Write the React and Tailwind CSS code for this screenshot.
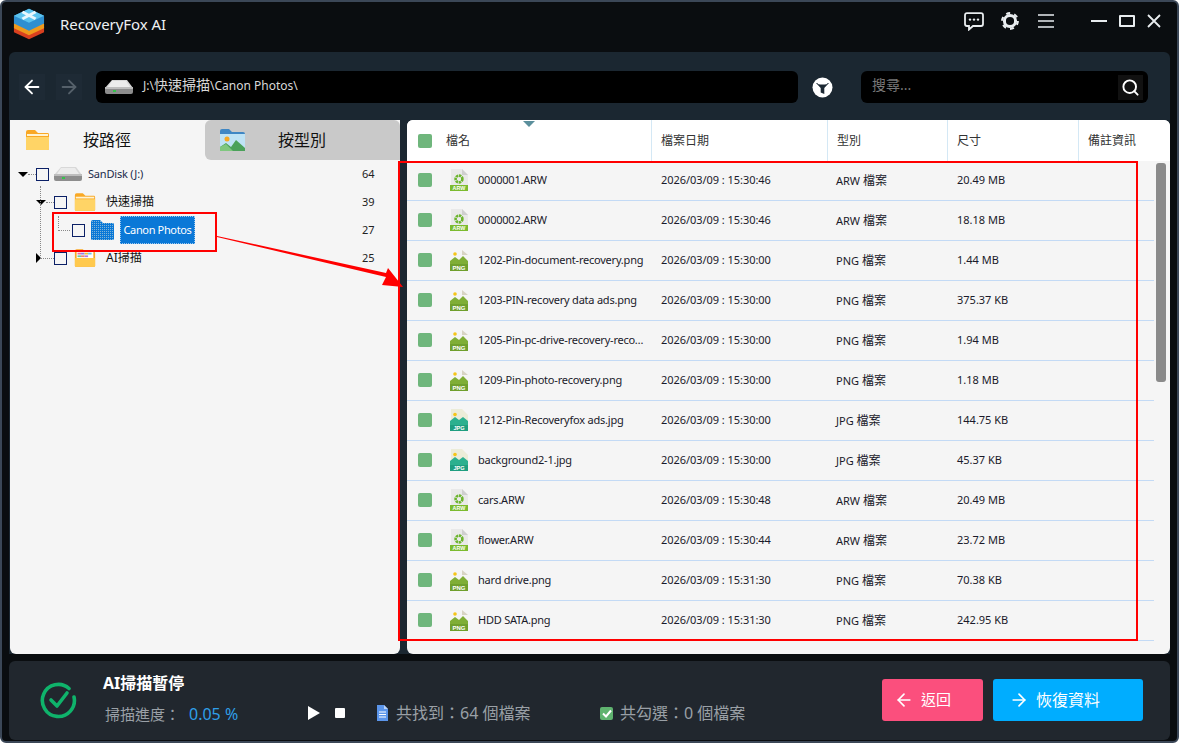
import React from 'react';
import { ArrowLeft, ArrowRight, Search } from 'lucide-react';

const files = [
  { name: '0000001.ARW', date: '2026/03/09 : 15:30:46', type: 'ARW', size: '20.49 MB', kind: 'arw' },
  { name: '0000002.ARW', date: '2026/03/09 : 15:30:46', type: 'ARW', size: '18.18 MB', kind: 'arw' },
  { name: '1202-Pin-document-recovery.png', date: '2026/03/09 : 15:30:00', type: 'PNG', size: '1.44 MB', kind: 'png' },
  { name: '1203-PIN-recovery data ads.png', date: '2026/03/09 : 15:30:00', type: 'PNG', size: '375.37 KB', kind: 'png' },
  { name: '1205-Pin-pc-drive-recovery-recovery.png', date: '2026/03/09 : 15:30:00', type: 'PNG', size: '1.94 MB', kind: 'png' },
  { name: '1209-Pin-photo-recovery.png', date: '2026/03/09 : 15:30:00', type: 'PNG', size: '1.18 MB', kind: 'png' },
  { name: '1212-Pin-Recoveryfox ads.jpg', date: '2026/03/09 : 15:30:00', type: 'JPG', size: '144.75 KB', kind: 'jpg' },
  { name: 'background2-1.jpg', date: '2026/03/09 : 15:30:00', type: 'JPG', size: '45.37 KB', kind: 'jpg' },
  { name: 'cars.ARW', date: '2026/03/09 : 15:30:48', type: 'ARW', size: '20.49 MB', kind: 'arw' },
  { name: 'flower.ARW', date: '2026/03/09 : 15:30:44', type: 'ARW', size: '23.72 MB', kind: 'arw' },
  { name: 'hard drive.png', date: '2026/03/09 : 15:31:30', type: 'PNG', size: '70.38 KB', kind: 'png' },
  { name: 'HDD SATA.png', date: '2026/03/09 : 15:31:30', type: 'PNG', size: '242.95 KB', kind: 'png' },
];

const Logo = () => (
  <svg width="32" height="32" viewBox="0 0 34 41" preserveAspectRatio="none">
    <path d="M17 15 L33 24 V31 L17 40 L1 31 V24 Z" fill="#d9401f" />
    <path d="M17 11 L33 20 V26 L17 35 L1 26 V20 Z" fill="#f09a1c" />
    <path d="M17 1 L33 10 V20 L17 29 L1 20 V10 Z" fill="#2f8fd0" />
    <path d="M17 1 L33 10 L17 19 L1 10 Z" fill="#5cc3ee" />
    <path d="M10 5 L24 14 M24 5 L10 14" stroke="#e8f7fd" strokeWidth="3.4" />
  </svg>
);

const Drive = ({ w = 30 }) => (
  <svg width={w} height="16" viewBox="0 0 30 16">
    <path d="M1 9 L8 1 H23 L29 9 Z" fill="#d8d8d8" />
    <path d="M8 2 H22 L26 8 H4 Z" fill="#ececec" />
    <rect x="1" y="8" width="28" height="7" rx="2" fill="#8d8d8d" />
    <rect x="1" y="8" width="28" height="2" fill="#bdbdbd" />
    <rect x="9" y="11" width="3" height="2" fill="#35c24a" />
  </svg>
);

const Folder = ({ w = 22, h = 20 }) => (
  <svg width={w} height={h} viewBox="0 0 25 22">
    <path d="M1 3 Q1 1 3 1 H10 L13 4 H23 Q24 4 24 6 V20 Q24 21 22 21 H3 Q1 21 1 20 Z" fill="#f9a825" />
    <rect x="2" y="5" width="21" height="2" fill="#fff3d0" />
    <path d="M1 8 H24 V20 Q24 21 22 21 H3 Q1 21 1 20 Z" fill="#ffd466" />
  </svg>
);

// the selected folder is drawn with a dither over it
const SelectedFolder = () => (
  <svg width="25" height="22" viewBox="0 0 25 22">
    <defs>
      <pattern id="dither" width="2" height="2" patternUnits="userSpaceOnUse">
        <rect width="2" height="2" fill="#0a78d7" />
        <rect width="1" height="1" fill="#7fb4d8" />
      </pattern>
    </defs>
    <path d="M1 3 Q1 1 3 1 H10 L13 4 H23 Q24 4 24 6 V20 Q24 21 22 21 H3 Q1 21 1 20 Z" fill="url(#dither)" />
  </svg>
);

const AiFolder = () => (
  <svg width="22" height="20" viewBox="0 0 25 22">
    <path d="M1 3 Q1 1 3 1 H10 L13 4 H23 Q24 4 24 6 V20 Q24 21 22 21 H3 Q1 21 1 20 Z" fill="#f9a825" />
    <rect x="3" y="4" width="19" height="8" fill="#fff" />
    <rect x="4" y="5" width="4" height="2" fill="#e86aa6" />
    <rect x="8" y="5" width="4" height="2" fill="#8e7ae6" />
    <rect x="12" y="5" width="4" height="2" fill="#e8c23a" />
    <rect x="16" y="5" width="4" height="2" fill="#6ac6e8" />
    <rect x="4" y="8" width="4" height="2" fill="#6ac6a0" />
    <rect x="8" y="8" width="4" height="2" fill="#e88a6a" />
    <rect x="12" y="8" width="4" height="2" fill="#b07ae6" />
    <path d="M1 11 H24 V20 Q24 21 22 21 H3 Q1 21 1 20 Z" fill="#ffc94d" />
  </svg>
);

const PictureFolder = () => (
  <svg width="25" height="22" viewBox="0 0 25 22">
    <path d="M0 2 Q0 0 2 0 H9 L12 3 H23 Q25 3 25 5 V20 Q25 22 23 22 H2 Q0 22 0 20 Z" fill="#3f87c4" />
    <rect x="0" y="5" width="25" height="17" fill="#bfe3f5" />
    <circle cx="7" cy="10" r="2.5" fill="#f7a823" />
    <path d="M0 22 V18 L6 14 L11 18 L16 11 L25 19 V22 Z" fill="#4ba15a" />
    <path d="M0 22 V18 L6 15 L13 22 Z" fill="#7fc77f" />
  </svg>
);

const ArwIcon = () => (
  <svg width="18" height="22" viewBox="0 0 18 22">
    <path d="M1 0 H12 L18 6 V22 H1 Z" fill="#e9e9e9" />
    <path d="M12 0 L18 6 H12 Z" fill="#cfcfcf" />
    <circle cx="9" cy="10" r="3.4" fill="none" stroke="#6cb52d" strokeWidth="2.6" strokeDasharray="2.4 0.7" />
    <rect x="0" y="16" width="18" height="6" fill="#7cbb2f" />
    <text x="9" y="21.2" textAnchor="middle" fontSize="5.4" fontWeight="700" fill="#fff" fontFamily="Liberation Sans, sans-serif">ARW</text>
  </svg>
);

const PngIcon = () => (
  <svg width="18" height="22" viewBox="0 0 18 22">
    <path d="M12 1 L18 6 H12 Z" fill="#d8d4c4" />
    <circle cx="5" cy="5" r="1.8" fill="#f5c518" />
    <path d="M0 22 V12 L5 8 L9 11 L13 7 L18 12 V22 Z" fill="#7fae35" />
    <rect x="0" y="15" width="18" height="7" fill="#6f9f2c" />
    <text x="9" y="21.2" textAnchor="middle" fontSize="6" fontWeight="700" fill="#fff" fontFamily="Liberation Sans, sans-serif">PNG</text>
  </svg>
);

const JpgIcon = () => (
  <svg width="18" height="22" viewBox="0 0 18 22">
    <path d="M1 0 H12 L18 6 V22 H1 Z" fill="#ececd8" />
    <circle cx="5" cy="5.5" r="1.8" fill="#f5c518" />
    <path d="M0 22 V12 L5 8 L9 11 L13 8 L18 12 V22 Z" fill="#2bb08f" />
    <rect x="0" y="16" width="18" height="6" fill="#1e9e80" />
    <text x="9" y="21.4" textAnchor="middle" fontSize="5.6" fontWeight="700" fill="#fff" fontFamily="Liberation Sans, sans-serif">JPG</text>
  </svg>
);

const fileIcons = { arw: ArwIcon, png: PngIcon, jpg: JpgIcon };

const ChatIcon = () => (
  <svg width="20" height="19" viewBox="0 0 20 19">
    <path d="M3 1.2 H17 Q19 1.2 19 3.2 V12 Q19 14 17 14 H9 L5 17.5 V14 H3 Q1 14 1 12 V3.2 Q1 1.2 3 1.2 Z" fill="none" stroke="#e8ecef" strokeWidth="1.8" />
    <circle cx="6" cy="7.6" r="1.2" fill="#e8ecef" />
    <circle cx="10" cy="7.6" r="1.2" fill="#e8ecef" />
    <circle cx="14" cy="7.6" r="1.2" fill="#e8ecef" />
  </svg>
);

const GearIcon = () => (
  <svg width="18" height="18" viewBox="0 0 18 18">
    <circle cx="9" cy="9" r="5.6" fill="none" stroke="#e8ecef" strokeWidth="3" />
    <circle cx="9" cy="9" r="7.8" fill="none" stroke="#e8ecef" strokeWidth="2.2" strokeDasharray="4 4.17" />
  </svg>
);

const MenuIcon = () => (
  <svg width="16" height="14" viewBox="0 0 16 14">
    <path d="M0 1 H16 M0 7 H16 M0 13 H16" stroke="#e8ecef" strokeWidth="1.6" />
  </svg>
);

const FilterIcon = () => (
  <svg width="21" height="21" viewBox="0 0 21 21">
    <circle cx="10.5" cy="10.5" r="10" fill="#fff" />
    <path d="M4 6 H17 L12.3 11 V17 L8.7 15.6 V11 Z" fill="#1c2833" />
    <ellipse cx="10.5" cy="6.4" rx="5" ry="1" fill="#fff" />
  </svg>
);

const CheckCircle = () => (
  <svg width="38" height="38" viewBox="0 0 38 38">
    <path d="M30 6.5 A16 16 0 1 0 35 15" fill="none" stroke="#0fb36b" strokeWidth="3.6" strokeLinecap="round" />
    <path d="M12 18 L18 24 L28 11" fill="none" stroke="#0fb36b" strokeWidth="3.6" strokeLinecap="round" strokeLinejoin="round" />
  </svg>
);

const DocIcon = () => (
  <svg width="12" height="16" viewBox="0 0 12 16">
    <path d="M1 0 H8 L12 4 V16 H1 Z" fill="#5b95ea" />
    <path d="M8 0 L12 4 H8 Z" fill="#b9d2f7" />
    <path d="M3 7 H10 M3 9.5 H10 M3 12 H10" stroke="#fff" strokeWidth="1" />
  </svg>
);

const Box = () => <div className="w-[13px] h-[13px] shrink-0 border border-[#0b1f66] bg-[#f5f5f5]" />;

const Count = ({ children }) => <span className="ml-auto w-[38px] text-[11px] text-[#222]">{children}</span>;

const Expander = ({ open }) =>
  open ? (
    <div className="w-0 h-0 border-x-[5px] border-x-transparent border-t-[5px] border-t-black" />
  ) : (
    <div className="w-0 h-0 border-y-[5px] border-y-transparent border-l-[5px] border-l-black" />
  );

const TreePanel = () => (
  <div className="relative w-[390px] h-full bg-[#f5f5f5] rounded-b-md">
    <div className="flex h-10">
      <div className="w-[195px] flex items-center pl-[15px] bg-[#f5f5f5] rounded-tl-md">
        <Folder w={25} h={22} />
        <span className="ml-[33px] text-[16px] text-[#111]">按路徑</span>
      </div>
      <div className="w-[195px] flex items-center pl-[15px] bg-[#c9c9c9] rounded-tl-md rounded-bl-md rounded-tr-md">
        <PictureFolder />
        <span className="ml-[33px] text-[16px] text-[#111]">按型別</span>
      </div>
    </div>
    <div className="flex h-7 items-center pl-2 text-[11px] text-[#1a2a4a]">
      <Expander open />
      <div className="w-2 border-t border-dotted border-[#888]" />
      <Box />
      <div className="ml-1 flex"><Drive /></div>
      <span className="ml-[5px] tracking-[-0.2px]">SanDisk (J:)</span>
      <Count>64</Count>
    </div>
    <div className="flex h-7 items-center pl-[26px] text-[12px] text-[#111]">
      <Expander open />
      <div className="w-2 border-t border-dotted border-[#888]" />
      <Box />
      <div className="ml-[7px] flex"><Folder /></div>
      <span className="ml-[10px]">快速掃描</span>
      <Count>39</Count>
    </div>
    <div className="flex h-7 items-center pl-[48px] text-[11px]">
      <div className="w-3 border-t border-dotted border-[#888]" />
      <div className="ml-[2px]"><Box /></div>
      <div className="ml-[5px] flex"><SelectedFolder /></div>
      <span className="ml-[5px] h-7 w-[75px] flex items-center justify-center bg-[#0a78d7] text-white border border-dotted border-[#9cc7ee] tracking-[-0.35px]">Canon Photos</span>
      <Count>27</Count>
    </div>
    <div className="flex h-7 items-center pl-[26px] text-[12px] text-[#111]">
      <Expander />
      <div className="w-[13px] border-t border-dotted border-[#888]" />
      <Box />
      <div className="ml-[7px] flex"><AiFolder /></div>
      <span className="ml-[10px]">AI掃描</span>
      <Count>25</Count>
    </div>
    <div className="absolute left-[30px] top-[66px] h-[72px] border-l border-dotted border-[#888]" />
    <div className="absolute left-[48px] top-[96px] h-[12px] border-l border-dotted border-[#888]" />
  </div>
);

const HeaderCell = ({ className, children }) => (
  <div className={`h-full flex items-center pl-[9px] border-l border-[#d4e8f5] text-[12px] text-[#333] ${className}`}>{children}</div>
);

const FilePanel = () => (
  <div className="relative w-[763px] h-full bg-[#f5f5f5] rounded-t-md rounded-b-md overflow-hidden">
    <div className="relative flex items-center h-[41px] bg-white">
      <div className="w-[244px] flex items-center pl-[11px]">
        <div className="w-[14px] h-[14px] rounded-[2px] bg-[#6fb67c]" />
        <span className="ml-[14px] text-[12px] text-[#333]">檔名</span>
      </div>
      <HeaderCell className="w-[176px]">檔案日期</HeaderCell>
      <HeaderCell className="w-[120px]">型別</HeaderCell>
      <HeaderCell className="w-[131px]">尺寸</HeaderCell>
      <HeaderCell className="flex-1">備註資訊</HeaderCell>
      <div className="absolute left-[116px] top-[1px] w-0 h-0 border-x-[6px] border-x-transparent border-t-[6px] border-t-[#5b8f9c]" />
    </div>
    <div className="flex">
      <div className="w-[747px]">
        {files.map((f) => {
          const Icon = fileIcons[f.kind];
          return (
            <div key={f.name} className="flex items-center h-10 border-b border-[#c3daf5] text-[11px] text-[#1a1a2a]">
              <div className="w-[14px] h-[14px] ml-[11px] mb-[1px] rounded-[2px] bg-[#6fb67c]" />
              <div className="ml-[18px] mb-[1px] flex"><Icon /></div>
              <span className="ml-[10px] w-[168px] truncate tracking-[-0.22px]">{f.name}</span>
              <span className="ml-[15px] w-[175px] tracking-[-0.05px]">{f.date}</span>
              <span className="w-[121px]">{f.type} <span className="text-[12px]">檔案</span></span>
              <span>{f.size}</span>
            </div>
          );
        })}
      </div>
      <div className="ml-[2px] mt-[2px] w-[10px] h-[219px] rounded-[3px] bg-[#8a8a8a]" />
    </div>
  </div>
);

const Annotations = () => (
  <>
    <div className="absolute left-[50px] top-[210px] w-[165px] h-10 border-2 border-[#f00]" />
    <div className="absolute left-[396px] top-[159px] w-[740px] h-[480px] border-2 border-[#f00]" />
    <svg className="absolute left-[208px] top-[228px]" width="200" height="65" viewBox="0 0 200 65">
      <path d="M7 6 L7 7 L176 47 L172 55 L193 57 L178 38 L176 43 Z" fill="#f00" />
    </svg>
  </>
);

export default function App() {
  return (
    <div
      className="relative w-[1179px] h-[743px] flex flex-col bg-[#0a0d10] border-2 border-[#3b4757] rounded-md overflow-hidden"
      style={{ fontFamily: '"Noto Sans", "Noto Sans CJK TC", sans-serif' }}
    >
      <div className="h-[50px] shrink-0 flex items-center pl-[11px] pr-[16px] pb-[6px]">
        <Logo />
        <span className="ml-[15px] text-[15px] tracking-[-0.05px] text-[#eef1f3]">RecoveryFox AI</span>
        <div className="ml-auto mb-[6px] flex items-center">
          <ChatIcon />
          <div className="ml-[17px] flex"><GearIcon /></div>
          <div className="ml-[19px] flex"><MenuIcon /></div>
          <div className="ml-[37px] w-[16px] h-[2px] bg-[#e8ecef]" />
          <div className="ml-[12px] w-[16px] h-[12px] border-2 border-[#e8ecef] rounded-[1px]" />
          <svg className="ml-[12px]" width="14" height="14" viewBox="0 0 14 14">
            <path d="M1 1 L13 13 M13 1 L1 13" stroke="#e8ecef" strokeWidth="1.8" />
          </svg>
        </div>
      </div>
      <div className="mx-[7px] w-[1161px] h-[602px] shrink-0 bg-[#1b2731] rounded-t-md flex flex-col">
        <div className="h-[68px] shrink-0 flex items-center pl-[10px] pt-[2px]">
          <div className="w-[26px] h-[26px] flex items-center justify-center bg-[#1e2a35]">
            <ArrowLeft size={22} color="#ffffff" strokeWidth={2} />
          </div>
          <div className="ml-[11px] w-[26px] h-[26px] flex items-center justify-center bg-[#1e2a35]">
            <ArrowRight size={22} color="#55606a" strokeWidth={2} />
          </div>
          <div className="ml-[14px] w-[702px] h-8 flex items-center pl-2 bg-black rounded-md text-[12px] text-[#d8d8d8]">
            <Drive />
            <span className="ml-[9px] mb-[5px]">J:\<span className="text-[14px]">快速掃描</span>\Canon Photos\</span>
          </div>
          <div className="ml-[14px] flex"><FilterIcon /></div>
          <div className="ml-[28px] w-[287px] h-8 flex items-center justify-between pl-[11px] pr-[5px] bg-black rounded-md">
            <span className="mb-[5px] text-[14px] text-[#777]">搜尋...</span>
            <div className="w-[25px] h-[25px] flex items-center justify-center bg-[#111]">
              <Search size={19} color="#ffffff" strokeWidth={2.4} />
            </div>
          </div>
        </div>
        <div className="flex-1 min-h-0 flex pl-[1px] gap-[7px]">
          <TreePanel />
          <FilePanel />
        </div>
      </div>
      <div className="mt-[7px] mx-[7px] w-[1161px] h-[79px] shrink-0 flex items-center bg-[#21272e] rounded-md">
        <div className="ml-[30px] flex"><CheckCircle /></div>
        <div className="ml-[26px] mb-[5px] flex flex-col gap-[11px] w-[200px]">
          <span className="text-[16px] leading-5 font-bold text-white">AI掃描暫停</span>
          <div className="ml-[2px] text-[15px] leading-5 text-[#9aa0a6]">
            掃描進度：<span className="ml-[9px] text-[16px] text-[#2f9fe8]">0.05 %</span>
          </div>
        </div>
        <div className="self-end mb-[17px] flex items-center text-[16px] leading-5 text-[#9aa0a6]">
          <div className="w-0 h-0 ml-[5px] border-y-[7px] border-y-transparent border-l-[12px] border-l-white" />
          <div className="ml-[15px] w-[10px] h-[10px] rounded-[1px] bg-white" />
          <div className="ml-[31px] flex"><DocIcon /></div>
          <span className="ml-[8px] w-[204px]">共找到：64 個檔案</span>
          <div className="w-[13px] h-[13px] flex items-center justify-center rounded-[2px] bg-[#5fb36f]">
            <svg width="10" height="9" viewBox="0 0 10 9"><path d="M1 4.5 L4 7.5 L9 1.5" fill="none" stroke="#fff" strokeWidth="2" /></svg>
          </div>
          <span className="ml-[7px]">共勾選：0 個檔案</span>
        </div>
        <div className="ml-auto mb-[2px] flex gap-[10px] mr-[27px]">
          <div className="w-[101px] h-[42px] flex items-center pl-[12px] rounded-[3px] bg-[#fb4f7d] text-[15px] text-white">
            <ArrowLeft size={20} color="#ffffff" strokeWidth={2} />
            <span className="ml-[7px]">返回</span>
          </div>
          <div className="w-[150px] h-[42px] flex items-center pl-[16px] rounded-[3px] bg-[#00adff] text-[16px] text-white">
            <ArrowRight size={20} color="#ffffff" strokeWidth={2} />
            <span className="ml-[7px]">恢復資料</span>
          </div>
        </div>
      </div>
      <Annotations />
    </div>
  );
}
